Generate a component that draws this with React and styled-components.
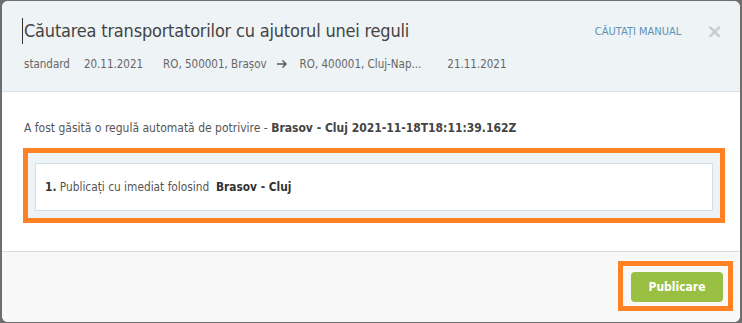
import React from "react";
import styled, { createGlobalStyle } from "styled-components";

const GlobalStyle = createGlobalStyle`
  html, body {
    margin: 0;
    padding: 0;
    background: #6e6e6e;
    font-family: "DejaVu Sans Condensed", "DejaVu Sans", "Liberation Sans", sans-serif;
  }
`;

const Page = styled.div`
  width: 742px;
  height: 323px;
  padding: 1px 2px 0 2px;
  box-sizing: border-box;
  overflow: hidden;
`;

const Modal = styled.div`
  width: 738px;
  height: 321px;
  background: #fff;
  border-radius: 6px;
  overflow: hidden;
  display: flex;
  flex-direction: column;
`;

const Header = styled.div`
  background: #eef3f6;
  border-bottom: 1px solid #d6e1e8;
  height: 91px;
  box-sizing: border-box;
  padding: 17px 17px 0 20px;
`;

const TitleRow = styled.div`
  display: flex;
  align-items: center;
  justify-content: space-between;
`;

const Title = styled.h1`
  margin: 0;
  font-size: 18px;
  letter-spacing: -0.2px;
  font-weight: normal;
  color: #444;
  border-left: 1px solid #333;
  padding-left: 1px;
  line-height: 26px;
`;

const Actions = styled.div`
  display: flex;
  align-items: center;
  gap: 25px;
`;

const ManualLink = styled.a`
  font-size: 11px;
  color: #5e92b4;
  text-transform: uppercase;
  text-decoration: none;
`;

const Close = styled.span`
  font-size: 20px;
  font-weight: bold;
  color: #c8ccce;
  line-height: 1;
  font-family: "DejaVu Sans", sans-serif;
`;

const Meta = styled.div`
  display: flex;
  align-items: center;
  margin-top: 13px;
  padding-left: 2px;
  font-size: 11.5px;
  color: #666;
`;

const MetaItem = styled.span`
  margin-right: ${(p) => p.gap || 16}px;
`;

const Arrow = styled.svg`
  margin-right: 12px;
`;

const Body = styled.div`
  flex: 1;
  padding: 28px 19px 0 21px;
  font-size: 12px;
  color: #555;
`;

const Notice = styled.p`
  margin: 0 0 12px 1px;
  line-height: 16px;

  b {
    color: #444;
  }
`;

const Highlight = styled.div`
  border: 5px solid #ff8124;
  box-sizing: border-box;
`;

const RuleWrap = styled(Highlight)`
  width: 702px;
  background: #edf3f6;
  padding: 10px 7px 7px 7px;
`;

const RuleBox = styled.div`
  background: #fff;
  border: 1px solid #cfdfe8;
  height: 48px;
  box-sizing: border-box;
  display: flex;
  align-items: center;
  padding-left: 9px;
  color: #555;
  font-size: 11.8px;

  b {
    color: #333;
  }
`;

const Footer = styled.div`
  height: 71px;
  background: #f8f8f8;
  border-top: 1px solid #dcdcdc;
  display: flex;
  justify-content: flex-end;
  align-items: flex-start;
  padding: 9px 7px 0 0;
  box-sizing: border-box;
`;

const ButtonFrame = styled(Highlight)`
  padding: 6px 5px 4px 8px;
`;

const Button = styled.button`
  width: 92px;
  height: 30px;
  border: none;
  border-radius: 4px;
  background: #99bf43;
  color: #fff;
  font-family: inherit;
  font-weight: bold;
  font-size: 12px;
  cursor: pointer;
`;

export default function App() {
  return (
    <>
      <GlobalStyle />
      <Page>
        <Modal>
          <Header>
            <TitleRow>
              <Title>Căutarea transportatorilor cu ajutorul unei reguli</Title>
              <Actions>
                <ManualLink href="#">Căutați manual</ManualLink>
                <Close>×</Close>
              </Actions>
            </TitleRow>
            <Meta>
              <MetaItem gap={14}>standard</MetaItem>
              <MetaItem gap={20}>20.11.2021</MetaItem>
              <MetaItem gap={10}>RO, 500001, Brașov</MetaItem>
              <Arrow width="11" height="10" viewBox="0 0 11 10">
                <path d="M0 5h9M5.5 1.5L9 5l-3.5 3.5" fill="none" stroke="#555" strokeWidth="1.4" />
              </Arrow>
              <MetaItem gap={26}>RO, 400001, Cluj-Nap...</MetaItem>
              <MetaItem>21.11.2021</MetaItem>
            </Meta>
          </Header>
          <Body>
            <Notice>
              A fost găsită o regulă automată de potrivire - <b>Brasov - Cluj 2021-11-18T18:11:39.162Z</b>
            </Notice>
            <RuleWrap>
              <RuleBox>
                <b>1.</b>&nbsp;Publicați cu imediat folosind&nbsp;&nbsp;<b>Brasov - Cluj</b>
              </RuleBox>
            </RuleWrap>
          </Body>
          <Footer>
            <ButtonFrame>
              <Button>Publicare</Button>
            </ButtonFrame>
          </Footer>
        </Modal>
      </Page>
    </>
  );
}
